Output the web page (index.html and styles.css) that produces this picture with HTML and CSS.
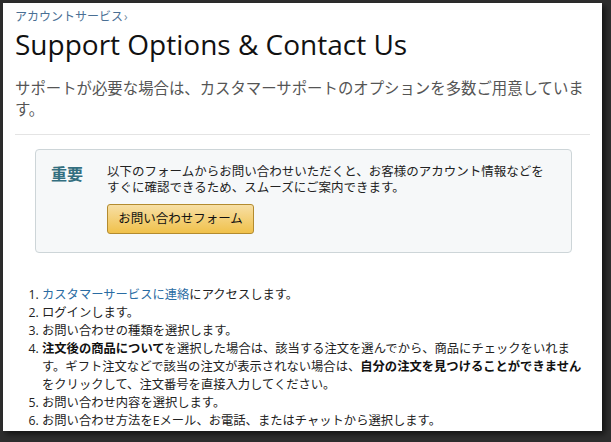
FILE: index.html
```html
<!DOCTYPE html>
<html lang="ja">
<head>
    <meta charset="UTF-8">
    <title>Support Options &amp; Contact Us</title>
    <link rel="stylesheet" href="styles.css">
</head>
<body>
<div id="page">
    <div class="crumb"><a href="#">アカウントサービス</a><span class="crumb-arrow">›</span></div>
    <h1 class="title">Support Options &amp; Contact Us</h1>
    <p class="lead">サポートが必要な場合は、カスタマーサポートのオプションを多数ご用意しています。</p>
    <hr class="divider">

    <div class="notice">
        <div class="notice-label">重要</div>
        <div class="notice-body">
            <p>以下のフォームからお問い合わせいただくと、お客様のアカウント情報などをすぐに確認できるため、スムーズにご案内できます。</p>
            <a href="#" class="btn">お問い合わせフォーム</a>
        </div>
    </div>

    <ol class="steps">
        <li><a href="#">カスタマーサービスに連絡</a>にアクセスします。</li>
        <li>ログインします。</li>
        <li>お問い合わせの種類を選択します。</li>
        <li><b>注文後の商品について</b>を選択した場合は、該当する注文を選んでから、商品にチェックをいれま<br>す。ギフト注文などで該当の注文が表示されない場合は、<b>自分の注文を見つけることができません</b><br>をクリックして、注文番号を直接入力してください。</li>
        <li>お問い合わせ内容を選択します。</li>
        <li>お問い合わせ方法をEメール、お電話、またはチャットから選択します。</li>
    </ol>
</div>
</body>
</html>
```

FILE: styles.css
```css
*{
    margin: 0;
    padding: 0;
}
html, body{
    height: 100%;
}
body{
    background-color: #2e2e2e;
    font-family: "Open Sans", "Noto Sans CJK JP", sans-serif;
    color: #222222;
    overflow: hidden;
}
a{
    color: #2a6ca3;
    text-decoration: none;
}
#page{
    width: 575px;
    height: 422px;
    margin: 3px 0 0 3px;
    padding: 6px 12px 0 12px;
    background-color: #ffffff;
    box-shadow: 3px 3px 6px rgba(0, 0, 0, 0.6);
}
.crumb{
    font-size: 12px;
    line-height: 16px;
}
.crumb a{
    color: #4a6f94;
}
.crumb-arrow{
    color: #7a8fa3;
    margin-left: 1px;
}
.title{
    font-size: 28px;
    font-weight: normal;
    line-height: 32px;
    color: #111111;
    margin-top: 3px;
}
.lead{
    font-size: 15.4px;
    line-height: 21px;
    color: #555555;
    margin-top: 18px;
}
.divider{
    border: none;
    border-top: 1px solid #e4e4e4;
    margin-top: 14px;
}
.notice{
    display: flex;
    margin: 14px 18px 0 20px;
    padding: 14px 16px 18px 15px;
    background-color: #f6f8f9;
    border: 1px solid #cdd5d8;
    border-radius: 4px;
}
.notice-label{
    width: 56px;
    flex-shrink: 0;
    font-size: 16px;
    font-weight: bold;
    line-height: 20px;
    color: #336f80;
}
.notice-body{
    font-size: 12.5px;
    line-height: 16px;
    color: #222222;
}
.btn{
    display: inline-block;
    margin-top: 8px;
    width: 145px;
    height: 28px;
    line-height: 28px;
    text-align: center;
    font-size: 12.5px;
    color: #111111;
    background: linear-gradient(#f7dfa5, #f0c14b);
    border: 1px solid #b38b2f;
    border-radius: 3px;
}
.steps{
    margin: 33px -12px 0 0;
    padding-left: 27px;
    font-size: 12.3px;
    line-height: 18px;
    color: #222222;
}
.steps b{
    color: #111111;
}
```
